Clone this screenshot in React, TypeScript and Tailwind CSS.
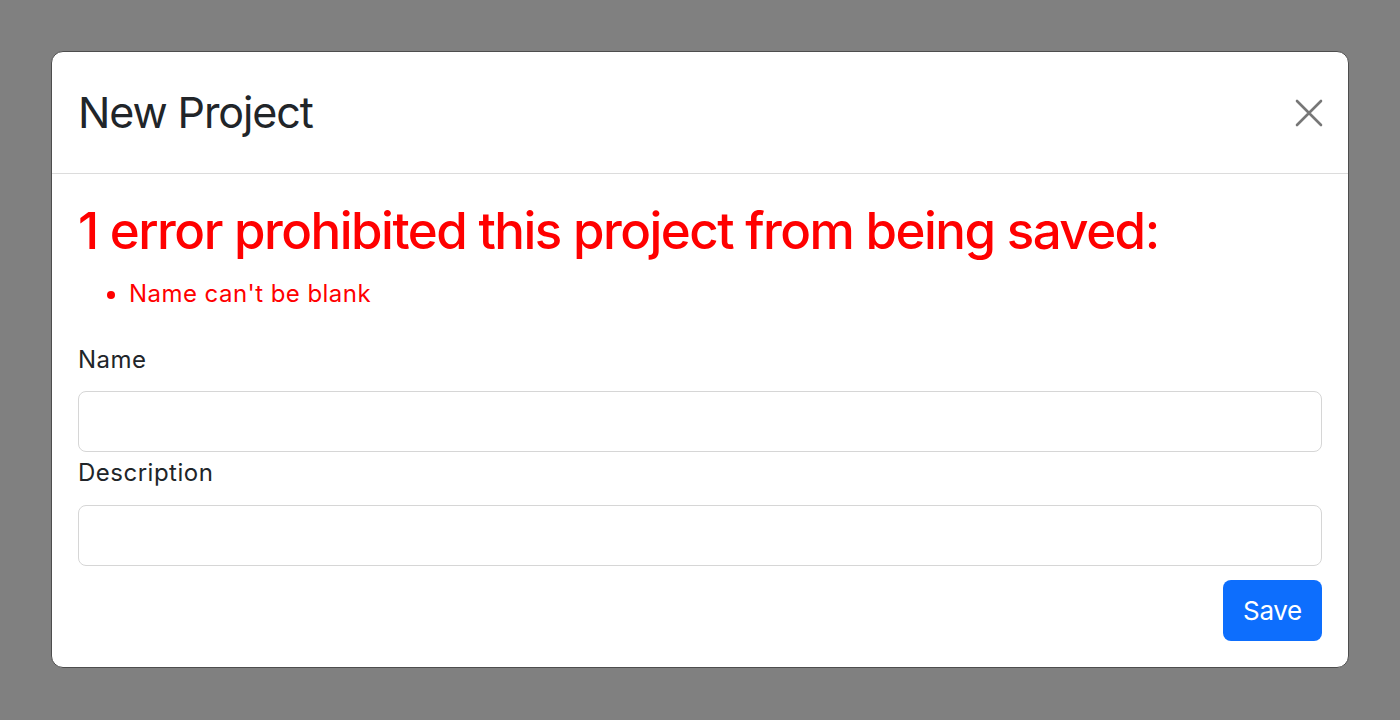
import React from "react";

export default function App() {
  return (
    <div
      className="w-[1400px] h-[720px] bg-[#808080] pt-[51px] px-[51px]"
      style={{ fontFamily: "Inter, 'Noto Sans', 'Liberation Sans', sans-serif" }}
    >
      <div className="bg-white rounded-[12px] border border-[#4d4d4d] overflow-hidden">
        {/* Header */}
        <div className="h-[122px] px-[26px] flex items-center justify-between border-b border-[#dcdcdc]">
          <h2 className="text-[43px] leading-none tracking-[-1.1px] text-[#212529] font-normal">New Project</h2>
          <button className="w-[28px] h-[28px] mr-[-1px] flex items-center justify-center text-[#777]">
            <svg width="28" height="28" viewBox="0 0 28 28" fill="none">
              <path d="M2 2L26 26M26 2L2 26" stroke="currentColor" strokeWidth="2.6" strokeLinecap="round" />
            </svg>
          </button>
        </div>

        {/* Body */}
        <div className="px-[26px] pt-[26px] pb-[26px]">
          <h1 className="text-[51px] leading-[62px] font-medium tracking-[-1.5px] text-[#ff0000]">
            1 error prohibited this project from being saved:
          </h1>
          <ul className="list-disc pl-[51px] mt-[14px] text-[24px] leading-[36px] tracking-[0.45px] text-[#ff0000]">
            <li>Name can't be blank</li>
          </ul>

          <div className="mt-[30px]">
            <label className="block text-[24px] leading-[36px] tracking-[0.5px] text-[#212529]">Name</label>
            <input
              type="text"
              className="mt-[13px] block w-full h-[61px] rounded-[8px] border border-[#d6d6d6] bg-white"
            />
          </div>
          <div className="mt-[3px]">
            <label className="block text-[24px] leading-[36px] tracking-[0.5px] text-[#212529]">Description</label>
            <input
              type="text"
              className="mt-[14px] block w-full h-[61px] rounded-[8px] border border-[#d6d6d6] bg-white"
            />
          </div>

          <div className="flex justify-end mt-[14px]">
            <button className="w-[99px] h-[61px] rounded-[8px] bg-[#0d6efd] text-white text-[26px] tracking-[-0.3px]">
              Save
            </button>
          </div>
        </div>
      </div>
    </div>
  );
}
